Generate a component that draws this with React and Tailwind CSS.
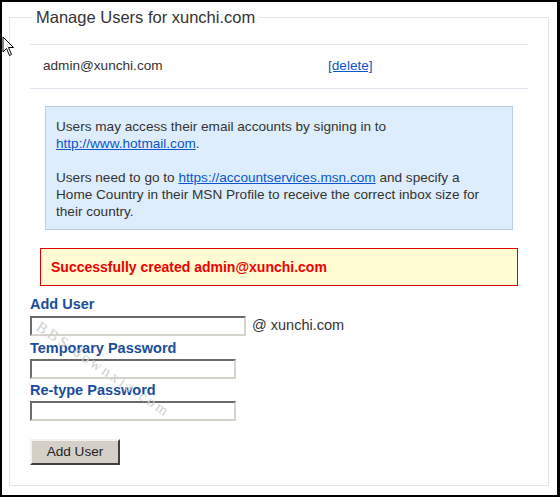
import React from "react";

const font = { fontFamily: '"Liberation Sans", Arial, sans-serif' };

const Field = ({ width }) => (
  <input
    type="text"
    className={`block h-[20px] ${width} border-2 border-t-[#6a6a6a] border-l-[#6a6a6a] border-b-[#d6d3cc] border-r-[#d6d3cc] bg-white outline-none`}
  />
);

const Label = ({ children }) => (
  <div className="text-[14.5px] font-bold leading-[17px] text-[#1b4c9c]">{children}</div>
);

export default function App() {
  return (
    <div
      className="relative w-[560px] h-[497px] overflow-hidden bg-white border-t-2 border-l-2 border-r-[3px] border-b-2 border-black text-[#333]"
      style={font}
    >
      {/* main panel */}
      <fieldset className="mt-[5px] ml-[7px] w-[540px] border border-[#dfe5ec] px-[20px] pb-[20px]">
        <legend className="ml-[2px] px-[4px] text-[16.5px] leading-[20px] text-[#333]">
          Manage Users for xunchi.com
        </legend>

        <div className="mt-[17px] flex h-[45px] items-center border-y border-[#dfe6ee] text-[13.6px]">
          <span className="ml-[13px] w-[285px]">admin@xunchi.com</span>
          <a href="#" className="text-[#0b55cf] underline">[delete]</a>
        </div>

        <div className="mt-[17px] mx-[15px] border border-[#b9cddf] bg-[#deedfb] pt-[11px] pb-[9px] pl-[10px] pr-[18px] text-[13.6px] leading-[17px]">
          <p>
            Users may access their email accounts by signing in to{" "}
            <a href="#" className="text-[#0b55cf] underline">http://www.hotmail.com</a>.
          </p>
          <p className="mt-[17px]">
            Users need to go to{" "}
            <a href="#" className="text-[#0b55cf] underline">https://accountservices.msn.com</a>{" "}
            and specify a Home Country in their MSN Profile to receive the correct inbox size for their country.
          </p>
        </div>

        <div className="mt-[18px] mx-[10px] h-[38px] flex items-center border border-[#e00000] bg-[#fffbd2] px-[10px] text-[14px] font-bold text-[#ee0000]">
          Successfully created admin@xunchi.com
        </div>

        <div className="mt-[10px]">
          <Label>Add User</Label>
          <div className="mt-[2px] flex items-center gap-[6px]">
            <Field width="w-[216px]" />
            <span className="text-[14.5px]">@ xunchi.com</span>
          </div>
          <div className="mt-[3px]">
            <Label>Temporary Password</Label>
          </div>
          <div className="mt-[2px]">
            <Field width="w-[206px]" />
          </div>
          <div className="mt-[3px]">
            <Label>Re-type Password</Label>
          </div>
          <div className="mt-[2px]">
            <Field width="w-[206px]" />
          </div>
          <button
            type="button"
            className="mt-[18px] h-[26px] w-[90px] border-2 border-t-[#f4f2ee] border-l-[#f4f2ee] border-b-[#404040] border-r-[#404040] bg-[#d4d0c8] text-[13.6px] text-[#222]"
          >
            Add User
          </button>
        </div>
      </fieldset>

      {/* watermark */}
      <div
        className="pointer-events-none absolute left-[36px] top-[312px] text-[15px] tracking-[3px] text-[#cfcfcf] origin-left rotate-[34deg]"
        style={{ fontFamily: '"Liberation Serif", serif' }}
      >
        BBS.downxia.com
      </div>

      {/* mouse cursor */}
      <svg className="pointer-events-none absolute left-0 top-[34px]" width="14" height="22" viewBox="0 0 14 22">
        <path d="M1 1 L1 16 L4.5 12.5 L7.5 19.5 L9.5 18.5 L6.5 11.5 L11.5 11.5 Z" fill="#fff" stroke="#000" strokeWidth="1" />
      </svg>
    </div>
  );
}
